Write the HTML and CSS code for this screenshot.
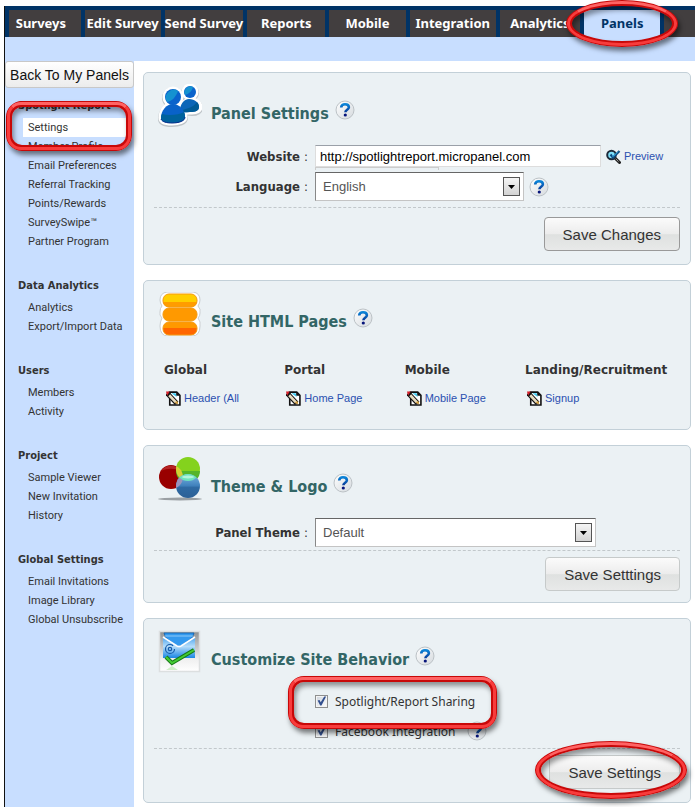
FILE: index.html
```html
<!DOCTYPE html>
<html lang="en">
<head>
    <meta charset="utf-8">
    <title>Panel Settings</title>
    <link rel="stylesheet" href="styles.css">
</head>
<body>
    <!-- shared icons -->
    <svg class="sprite" aria-hidden="true">
        <defs>
            <linearGradient id="helpBg" x1="0" y1="0" x2="1" y2="1">
                <stop offset="0" stop-color="#fff"/>
                <stop offset="1" stop-color="#d5dade"/>
            </linearGradient>
            <linearGradient id="helpInk" x1="0" y1="0" x2="0" y2="1">
                <stop offset="0" stop-color="#0a84d8"/>
                <stop offset="1" stop-color="#0a3c9a"/>
            </linearGradient>
            <linearGradient id="boxBg" x1="0" y1="0" x2="0" y2="1">
                <stop offset="0" stop-color="#f6f6f6"/>
                <stop offset="1" stop-color="#d2d2d2"/>
            </linearGradient>
        </defs>
        <symbol id="help" viewBox="0 0 20 20">
            <circle cx="10" cy="10" r="9" fill="url(#helpBg)" stroke="#bcc2c6"/>
            <path d="M6.200 7.600C6.200 5.200 8 4.200 10 4.200c2.200 0 3.900 1.100 3.900 3.100 0 2.500-3.500 2.500-3.500 4.900" fill="none" stroke="url(#helpInk)" stroke-width="2.600"/>
            <circle cx="10.300" cy="15" r="1.600" fill="#06147a"/>
        </symbol>
        <symbol id="edit" viewBox="0 0 14 14">
            <path d="M3.500 1h6.500l3 3v9H3.500z" fill="#fff" stroke="#111" stroke-width="1.500"/>
            <path d="M9.500 1v3.500H13z" fill="#111"/>
            <path d="M5 2h4l1 3.500z" fill="#3cc8ee"/>
            <path d="M1 2l9 9.500" stroke="#111" stroke-width="4.500"/>
            <path d="M3 4l6.500 6.800" stroke="#e6dcc0" stroke-width="2.500"/>
            <path d="M0 .5h3.500L1 4.500z" fill="#d8202a"/>
            <path d="M8 11l3.500 1.500L10.500 9z" fill="#d9a441"/>
        </symbol>
        <symbol id="preview" viewBox="0 0 15 15">
            <path d="M8.500 8.500l5 5" stroke="#222" stroke-width="3" stroke-linecap="round"/>
            <path d="M9.500 9.500l3 3" stroke="#999" stroke-width="1"/>
            <circle cx="5.500" cy="6" r="4.300" fill="#7fe0fa" stroke="#1c2a3a" stroke-width="2"/>
            <path d="M4.500 5.500l2.500 3L13.500 2" fill="none" stroke="#0e4a80" stroke-width="2.200"/>
            <path d="M6 6.500l1.200 1L12 2.500" fill="none" stroke="#37b6ee" stroke-width="1"/>
        </symbol>
        <symbol id="arrow" viewBox="0 0 17 19">
            <rect x=".5" y=".5" width="16" height="18" fill="url(#boxBg)" stroke="#555"/>
            <path d="M5 8h7l-3.500 4z" fill="#000"/>
        </symbol>
    </svg>

    <div class="page">
        <nav class="tabs">
            <a class="tab" href="#">Surveys</a>
            <a class="tab" href="#">Edit Survey</a>
            <a class="tab" href="#">Send Survey</a>
            <a class="tab" href="#">Reports</a>
            <a class="tab" href="#">Mobile</a>
            <a class="tab" href="#">Integration</a>
            <a class="tab" href="#">Analytics</a>
            <a class="tab active" href="#">Panels<span class="ring oval ring-tab"></span></a>
            <span class="tab"></span>
        </nav>
        <div class="strip"></div>

        <div class="columns">
            <aside class="sidebar">
                <button type="button" class="back">Back To My Panels</button>

                <section class="group">
                    <h3>Spotlight Report</h3>
                    <ul>
                        <li class="current"><a href="#">Settings</a><span class="ring ring-side"></span></li>
                        <li><a href="#">Member Profile</a></li>
                        <li><a href="#">Email Preferences</a></li>
                        <li><a href="#">Referral Tracking</a></li>
                        <li><a href="#">Points/Rewards</a></li>
                        <li><a href="#">SurveySwipe™</a></li>
                        <li><a href="#">Partner Program</a></li>
                    </ul>
                </section>
                <section class="group">
                    <h3>Data Analytics</h3>
                    <ul>
                        <li><a href="#">Analytics</a></li>
                        <li><a href="#">Export/Import Data</a></li>
                    </ul>
                </section>
                <section class="group">
                    <h3>Users</h3>
                    <ul>
                        <li><a href="#">Members</a></li>
                        <li><a href="#">Activity</a></li>
                    </ul>
                </section>
                <section class="group">
                    <h3>Project</h3>
                    <ul>
                        <li><a href="#">Sample Viewer</a></li>
                        <li><a href="#">New Invitation</a></li>
                        <li><a href="#">History</a></li>
                    </ul>
                </section>
                <section class="group">
                    <h3>Global Settings</h3>
                    <ul>
                        <li><a href="#">Email Invitations</a></li>
                        <li><a href="#">Image Library</a></li>
                        <li><a href="#">Global Unsubscribe</a></li>
                    </ul>
                </section>
            </aside>

            <main class="main">
                <form class="card">
                    <div class="card-head">
                        <svg class="card-icon" viewBox="0 0 44 44">
                            <g fill="#bfc5c9" stroke="#bfc5c9" stroke-width="6" stroke-linejoin="round">
                                <circle cx="32" cy="9" r="6"/><circle cx="15" cy="14" r="8"/>
                                <path d="M23 28c0-6 4-11 10-11s9 4 9 7-3 5-8 5zM3 35c0-7 5-14 12-14s12 7 12 13c0 4-6 6-13 6S3 38 3 35z"/>
                            </g>
                            <g fill="#fff" stroke="#fff" stroke-width="5" stroke-linejoin="round">
                                <circle cx="32" cy="8" r="6"/><circle cx="15" cy="13" r="8"/>
                                <path d="M23 27c0-6 4-11 10-11s9 4 9 7-3 5-8 5zM3 34c0-7 5-14 12-14s12 7 12 13c0 4-6 6-13 6S3 37 3 34z"/>
                            </g>
                            <path d="M22 27c0-7 4-12 9-12 6 0 10 4 10 8s-4 5-9 5c-4 0-10 1-10-1z" fill="#0b66b8"/>
                            <path d="M22 27c5-2 13-3 17-9 2 2 2 4 2 5 0 4-4 5-9 5-4 0-10 1-10-1z" fill="#005b96"/>
                            <circle cx="32" cy="8" r="6" fill="#0a63cc"/>
                            <path d="M27 11a6 6 0 0 1 8-8c-1 4-4 7-8 8z" fill="#1592d0"/>
                            <path d="M3 34c0-7 5-14 12-14s12 7 12 13c0 4-6 6-13 6S3 37 3 34z" fill="#0962c9"/>
                            <path d="M4 30c7 2 17 1 22-2 1 2 1 3 1 5 0 4-6 6-13 6S3 37 3 34c0-1 0-3 1-4z" fill="#00629d"/>
                            <path d="M3 35c1 3 6 4 11 4 7 0 13-2 13-6" fill="none" stroke="#0a2f8c" stroke-width="1"/>
                            <circle cx="15" cy="13" r="8" fill="#0a63cc"/>
                            <path d="M9 18a8 8 0 0 1 11-11c-2 6-6 10-11 11z" fill="#1592d0"/>
                        </svg>
                        <h2>Panel Settings</h2>
                        <svg class="help"><use href="#help"/></svg>
                    </div>
                    <div class="card-body">
                        <div class="row">
                            <label for="website">Website <span>:</span></label>
                            <input type="text" id="website" class="url" value="http://spotlightreport.micropanel.com">
                            <a class="icon-link preview" href="#"><svg><use href="#preview"/></svg>Preview</a>
                        </div>
                        <div class="suggest"></div>
                        <div class="row">
                            <label for="language">Language <span>:</span></label>
                            <span class="select language">
                                <select id="language"><option>English</option></select>
                                <svg><use href="#arrow"/></svg>
                            </span>
                            <svg class="help"><use href="#help"/></svg>
                        </div>
                    </div>
                    <div class="card-foot">
                        <button type="button" class="save strong">Save Changes</button>
                    </div>
                </form>

                <section class="card">
                    <div class="card-head">
                        <svg class="card-icon" viewBox="0 0 44 44">
                            <path d="M9 0h26q7 1 7 8 0 3-2 6 3 3 2 7 0 3-2 5 3 4 2 8 0 10-8 10H10q-8 0-8-10 0-4 2-8-3-3-2-6 0-4 2-6-2-3-2-6 0-7 7-8z" fill="#fff" stroke="#c9cdd0"/>
                            <rect x="5" y="2" width="34" height="13" rx="6" fill="#ffce00"/>
                            <path d="M5 10h34q-1 5-6 5H11q-5 0-6-5z" fill="#ff9c00"/>
                            <rect x="5" y="16" width="34" height="13" rx="6" fill="#ff9900"/>
                            <rect x="5" y="30" width="34" height="13" rx="6" fill="#ff9900"/>
                            <path d="M5 36h34q0 7-6 7H11q-6 0-6-7z" fill="#ff6600"/>
                            <g fill="none" stroke="#f59a10">
                                <rect x="5" y="2" width="34" height="13" rx="6"/>
                                <rect x="5" y="16" width="34" height="13" rx="6"/>
                                <rect x="5" y="30" width="34" height="13" rx="6"/>
                            </g>
                        </svg>
                        <h2>Site HTML Pages</h2>
                        <svg class="help"><use href="#help"/></svg>
                    </div>
                    <div class="links">
                        <div>
                            <h4>Global</h4>
                            <a class="icon-link" href="#"><svg><use href="#edit"/></svg>Header (All</a>
                        </div>
                        <div>
                            <h4>Portal</h4>
                            <a class="icon-link" href="#"><svg><use href="#edit"/></svg>Home Page</a>
                        </div>
                        <div>
                            <h4>Mobile</h4>
                            <a class="icon-link" href="#"><svg><use href="#edit"/></svg>Mobile Page</a>
                        </div>
                        <div>
                            <h4>Landing/Recruitment</h4>
                            <a class="icon-link" href="#"><svg><use href="#edit"/></svg>Signup</a>
                        </div>
                    </div>
                </section>

                <form class="card compact">
                    <div class="card-head">
                        <svg class="card-icon" viewBox="0 0 44 44">
                            <defs>
                                <linearGradient id="blueBall" x1="0" y1="0" x2="0" y2="1">
                                    <stop offset="0" stop-color="#79b5e4"/>
                                    <stop offset=".5" stop-color="#3f80bb"/>
                                    <stop offset=".55" stop-color="#2f6aa3"/>
                                    <stop offset="1" stop-color="#2d6096"/>
                                </linearGradient>
                                <clipPath id="green"><circle cx="30" cy="12" r="12"/></clipPath>
                                <clipPath id="blue"><circle cx="30" cy="29" r="12"/></clipPath>
                            </defs>
                            <ellipse cx="22" cy="42" rx="22" ry="1.500" fill="#9a9fa3"/>
                            <circle cx="13" cy="20" r="12" fill="#990000"/>
                            <path d="M3 14a12 12 0 0 1 20 0c-6-3-14-3-20 0z" fill="#b52424"/>
                            <circle cx="30" cy="12" r="12" fill="#84d21d"/>
                            <path d="M18 14h24a12 12 0 0 1-24 0z" fill="#55b52b"/>
                            <circle cx="13" cy="20" r="12" fill="#d6cf35" clip-path="url(#green)"/>
                            <circle cx="30" cy="29" r="12" fill="url(#blueBall)"/>
                            <circle cx="13" cy="20" r="12" fill="#9a93bd" clip-path="url(#blue)"/>
                            <circle cx="30" cy="12" r="12" fill="#6fe3bd" clip-path="url(#blue)"/>
                            <ellipse cx="30" cy="20" rx="6" ry="1.500" fill="#b4f5dc"/>
                        </svg>
                        <h2>Theme &amp; Logo</h2>
                        <svg class="help"><use href="#help"/></svg>
                    </div>
                    <div class="card-body">
                        <div class="row">
                            <label for="theme">Panel Theme <span>:</span></label>
                            <span class="select theme">
                                <select id="theme"><option>Default</option></select>
                                <svg><use href="#arrow"/></svg>
                            </span>
                        </div>
                    </div>
                    <div class="card-foot">
                        <button type="button" class="save">Save Setttings</button>
                    </div>
                </form>

                <form class="card behavior">
                    <div class="card-head">
                        <svg class="card-icon" viewBox="0 0 44 44">
                            <defs>
                                <linearGradient id="mailBg" x1="0" y1="0" x2="0" y2="1">
                                    <stop offset="0" stop-color="#8d9092"/>
                                    <stop offset=".7" stop-color="#f0f0f0"/>
                                    <stop offset="1" stop-color="#fff"/>
                                </linearGradient>
                                <linearGradient id="mail" x1="0" y1="0" x2="0" y2="1">
                                    <stop offset="0" stop-color="#4aa3ee"/>
                                    <stop offset=".45" stop-color="#b5ddfa"/>
                                    <stop offset="1" stop-color="#1b86e4"/>
                                </linearGradient>
                            </defs>
                            <rect x="1.500" y="1.500" width="40" height="40" fill="url(#mailBg)" stroke="#dcdfe0" stroke-width="1.500"/>
                            <path d="M5 7h32v21H5z" fill="url(#mail)"/>
                            <path d="M6 3h30l-2 5-11 8q-2 1-4 0L8 8z" fill="#3399ee" stroke="#0b5dad" stroke-width=".8"/>
                            <path d="M7 6h28" stroke="#8fcaf7"/>
                            <path d="M5 7l14 9q2 1 4 0l14-9" fill="none" stroke="#fff" stroke-width="1.500"/>
                            <circle cx="12" cy="19" r="4.500" fill="none" stroke="#155aa8" stroke-width="1.200" stroke-dasharray="24 4"/>
                            <circle cx="12" cy="19" r="1.700" fill="none" stroke="#155aa8" stroke-width="1.200"/>
                            <path d="M8 27l6 6 22-13" fill="none" stroke="#187a18" stroke-width="4"/>
                            <path d="M8 27l6 6 22-13" fill="none" stroke="#44cc33" stroke-width="2"/>
                            <path d="M8 40l6-4 6 4z" fill="#cfeec8"/>
                        </svg>
                        <h2>Customize Site Behavior</h2>
                        <svg class="help"><use href="#help"/></svg>
                    </div>
                    <div class="card-body">
                        <div class="check">
                            <input type="checkbox" id="sharing" checked>
                            <label for="sharing">Spotlight/Report Sharing</label>
                            <span class="ring ring-check"></span>
                        </div>
                        <div class="check">
                            <input type="checkbox" id="facebook" checked>
                            <label for="facebook">Facebook Integration</label>
                            <svg class="help"><use href="#help"/></svg>
                        </div>
                    </div>
                    <div class="card-foot">
                        <button type="button" class="save">Save Settings</button>
                        <span class="ring oval ring-save"></span>
                    </div>
                </form>
            </main>
        </div>
    </div>
</body>
</html>
```

FILE: styles.css
```css
* {
    box-sizing: border-box;
}
body {
    margin: 0;
    background-color: #fff;
    font-family: "DejaVu Sans Condensed", "DejaVu Sans", sans-serif;
    font-size: 11px;
    color: #333;
}
h2, h3, h4, ul {
    margin: 0;
    padding: 0;
}
a {
    color: #333;
    text-decoration: none;
}
.sprite {
    position: absolute;
    width: 0;
    height: 0;
}
.page {
    margin: 6px 4px 0 4px;
    border-left: 1px solid #111;
}

/* top navigation */
.tabs {
    display: grid;
    grid-template-columns: 72fr 76fr 77fr 78fr 77fr 86fr 81fr 76fr 31fr;
    gap: 4px;
    padding: 4px 0 0 4px;
    background-color: #003366;
}
.tab {
    height: 27px;
    line-height: 27px;
    background-color: #423e3f;
    color: #fff;
    font-family: "Noto Sans", sans-serif;
    font-size: 13px;
    font-weight: bold;
    text-align: center;
    white-space: nowrap;
}
.tab.active {
    position: relative;
    background-color: #c8deff;
    color: #003366;
}
.tab:first-child {
    padding-right: 8px;
}
.strip {
    height: 24px;
    background-color: #c8deff;
}

/* sidebar */
.columns {
    display: flex;
}
.sidebar {
    width: 129px;
    flex-shrink: 0;
    background-color: #c8deff;
}
.back {
    display: block;
    width: 100%;
    height: 27px;
    padding: 0;
    margin-bottom: 8px;
    border: 1px solid #c8c8c8;
    border-radius: 3px;
    background: linear-gradient(#fff, #ececec);
    font-family: "Liberation Sans", Arial, sans-serif;
    font-size: 14px;
    color: #111;
}
.group {
    margin-bottom: 25px;
}
.group h3 {
    padding-left: 13px;
    margin-bottom: 3px;
    font-size: 11px;
    line-height: 19px;
}
.group ul {
    list-style: none;
}
.group li {
    margin: 0 8px 0 18px;
    padding-left: 5px;
    line-height: 19px;
    font-family: Roboto, sans-serif;
    white-space: nowrap;
}
.group .current {
    position: relative;
    background-color: #fff;
}

/* cards */
.main {
    flex: 1;
    display: flex;
    flex-direction: column;
    gap: 15px;
    padding: 11px 4px 4px 9px;
}
.card {
    border: 1px solid #c3d0d8;
    border-radius: 5px;
    background-color: #ebf1f4;
    padding: 0 10px;
}
.card-head {
    display: flex;
    align-items: flex-start;
    gap: 6px;
    padding: 11px 0 17px 4px;
}
.card-icon {
    width: 44px;
    height: 44px;
    margin-right: 3px;
}
.card-head h2 {
    margin-top: 18px;
    font-size: 16px;
    line-height: 24px;
    color: #336666;
}
.help {
    width: 20px;
    height: 20px;
}
.card-head .help {
    margin-top: 16px;
}
.card-body {
    padding-bottom: 6px;
}
.compact .card-body {
    padding-bottom: 3px;
}
.row {
    display: flex;
    align-items: center;
}
.row label {
    width: 154px;
    margin-right: 7px;
    font-size: 13px;
    font-weight: bold;
    text-align: right;
}
.row label span {
    font-weight: normal;
}
.row .help {
    margin-left: 5px;
}
.url {
    width: 286px;
    height: 22px;
    padding: 0 4px;
    border: 1px solid #ddd;
    border-top-color: #9aa0a8;
    background-color: #fff;
    font-family: "Liberation Sans", Arial, sans-serif;
    font-size: 13px;
    color: #000;
}
.suggest {
    width: 124px;
    height: 3px;
    margin: 0 0 2px 161px;
    border: 1px solid #ccc;
    border-bottom: none;
}
.select {
    position: relative;
    height: 29px;
}
.language {
    width: 209px;
}
.theme {
    width: 281px;
}
.select select {
    appearance: none;
    width: 100%;
    height: 100%;
    padding: 0 7px;
    border: 1px solid #c4c4c4;
    border-top-color: #666;
    border-left-color: #888;
    border-radius: 0;
    background-color: #fff;
    font-family: "Liberation Sans", Arial, sans-serif;
    font-size: 13px;
    color: #555;
}
.select svg {
    position: absolute;
    top: 5px;
    right: 4px;
    width: 17px;
    height: 19px;
    pointer-events: none;
}
.icon-link {
    display: flex;
    align-items: center;
    gap: 3px;
    font-family: "Liberation Sans", Arial, sans-serif;
    font-size: 11px;
    color: #2a50b0;
    white-space: nowrap;
}
.icon-link svg {
    width: 15px;
    height: 15px;
}
.preview {
    margin-left: 5px;
}
.links {
    display: grid;
    grid-template-columns: repeat(3, 1fr) 145px;
    padding: 7px 10px 21px;
}
.links h4 {
    margin-bottom: 8px;
    font-family: "DejaVu Sans", sans-serif;
    font-size: 12px;
    line-height: 20px;
    white-space: nowrap;
}
.links .icon-link {
    height: 20px;
    padding-left: 2px;
}
.card-foot {
    position: relative;
    display: flex;
    justify-content: flex-end;
    padding: 9px 0 13px;
    border-top: 1px dashed #c2c8cb;
}
.compact .card-foot {
    padding: 6px 0 11px;
}
.save {
    height: 34px;
    padding: 0 18px;
    border: 1px solid #c6caca;
    border-radius: 4px;
    background: linear-gradient(#fbfbfb, #ececec 50%, #dfe1e0 52%, #e8e9e9);
    font-family: "Liberation Sans", Arial, sans-serif;
    font-size: 15px;
    color: #333;
}
.save.strong {
    border-color: #999;
}

/* site behavior options */
.behavior .card-body {
    display: flex;
    flex-direction: column;
    gap: 10px;
    padding: 0 0 7px 161px;
}
.behavior .card-foot {
    padding-top: 6px;
}
.check {
    position: relative;
    display: flex;
    align-items: center;
    align-self: flex-start;
    height: 20px;
    font-family: "Noto Sans", sans-serif;
    font-size: 12px;
}
.check input {
    appearance: none;
    width: 13px;
    height: 13px;
    margin: 0 7px 0 0;
    border: 1px solid #8e8f8f;
    background: linear-gradient(135deg, #ccd3dc, #fff);
    box-shadow: inset 0 0 0 1px #f4f4f4;
}
.check input:checked::before {
    content: "";
    display: block;
    width: 11px;
    height: 11px;
    background-color: #33508f;
    clip-path: polygon(15% 45%, 32% 42%, 43% 62%, 75% 10%, 92% 10%, 50% 90%, 38% 90%);
}
.check .help {
    margin-left: 12px;
}

/* red callouts */
.ring {
    position: absolute;
    z-index: 2;
    border: 6px solid #c80808;
    border-radius: 16px;
    box-shadow: 2px 4px 5px rgba(0, 0, 0, 0.5), inset 2px 4px 5px rgba(0, 0, 0, 0.4);
    pointer-events: none;
}
.ring::after {
    content: "";
    position: absolute;
    inset: -5px;
    border: 3px solid #f83c3c;
    border-top-color: #ff6464;
    border-radius: 14px;
}
.oval, .oval::after {
    border-radius: 50%;
}
.ring-tab {
    inset: -10px -18px;
}
.ring-side {
    inset: -17px -6px -14px -17px;
}
.ring-check {
    inset: -15px -22px -18px -27px;
}
.ring-save {
    width: 152px;
    top: -8px;
    right: -7px;
    bottom: 3px;
}
```
